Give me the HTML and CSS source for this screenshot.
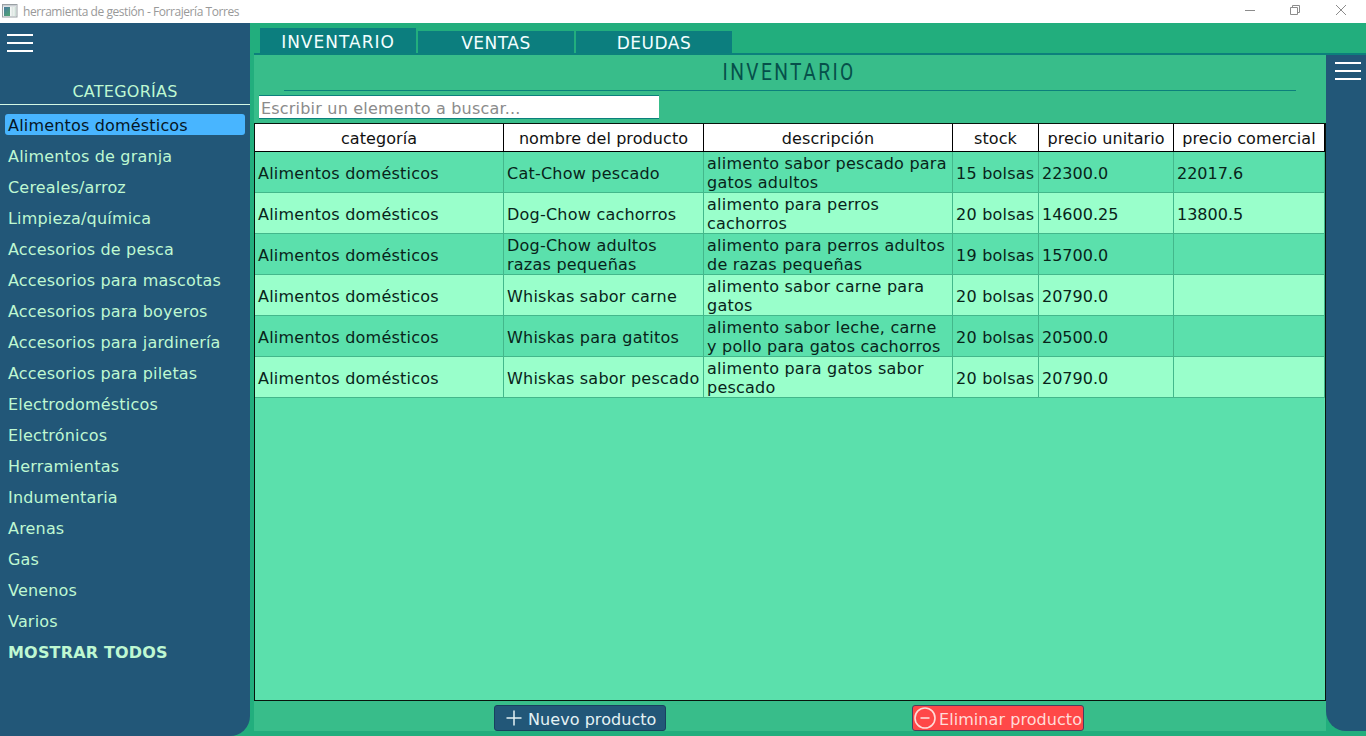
FILE: index.html
```html
<!DOCTYPE html>
<html lang="es">
<head>
<meta charset="utf-8">
<title>herramienta de gestión - Forrajería Torres</title>
<link rel="stylesheet" href="styles.css">
</head>
<body>
<header class="titlebar">
  <svg class="app-icon" width="16" height="14" viewBox="0 0 16 14">
    <defs><linearGradient id="pane" x1="0" y1="0" x2="0.6" y2="1"><stop offset="0" stop-color="#4a7aa0"/><stop offset="1" stop-color="#4fa077"/></linearGradient></defs>
    <rect x="0.5" y="0.5" width="14.5" height="12.5" fill="#f4f6f6" stroke="#9aa0a4"/>
    <rect x="1" y="1" width="13.5" height="1.5" fill="#c9ced2"/>
    <rect x="2" y="3" width="6" height="9" fill="url(#pane)"/>
    <rect x="9.5" y="3" width="2" height="9" fill="#dfe8e4"/>
    <rect x="12.5" y="3" width="1.5" height="9" fill="#cfe0d8"/>
  </svg>
  <span class="window-title">herramienta de gestión - Forrajería Torres</span>
  <svg class="window-controls" width="104" height="12" viewBox="0 0 104 12" fill="none" stroke="#8c8c8c">
    <path d="M0 6.5h10"/>
    <path d="M45.500 3.500h7v7h-7zM47.500 3.500v-2h7v7h-2"/>
    <path d="M91 1l10 10M101 1l-10 10"/>
  </svg>
</header>
<div class="app">
  <aside class="sidebar">
    <div class="burger"><i></i><i></i><i></i></div>
    <h2 class="sidebar-title">CATEGORÍAS</h2>
    <ul class="categories">
      <li class="selected">Alimentos domésticos</li>
      <li>Alimentos de granja</li>
      <li>Cereales/arroz</li>
      <li>Limpieza/química</li>
      <li>Accesorios de pesca</li>
      <li>Accesorios para mascotas</li>
      <li>Accesorios para boyeros</li>
      <li>Accesorios para jardinería</li>
      <li>Accesorios para piletas</li>
      <li>Electrodomésticos</li>
      <li>Electrónicos</li>
      <li>Herramientas</li>
      <li>Indumentaria</li>
      <li>Arenas</li>
      <li>Gas</li>
      <li>Venenos</li>
      <li>Varios</li>
      <li class="all">MOSTRAR TODOS</li>
    </ul>
  </aside>
  <main class="workspace">
    <nav class="tabs">
      <div class="tab active">INVENTARIO</div>
      <div class="tab">VENTAS</div>
      <div class="tab">DEUDAS</div>
    </nav>
    <div class="body">
      <section class="page">
        <h1 class="page-title"><span>INVENTARIO</span></h1>
        <input class="search" type="text" placeholder="Escribir un elemento a buscar...">
        <div class="table-frame">
          <table>
            <colgroup><col class="c-cat"><col class="c-name"><col class="c-desc"><col class="c-stock"><col class="c-unit"><col class="c-com"></colgroup>
            <thead><tr><th>categoría</th><th>nombre del producto</th><th>descripción</th><th>stock</th><th>precio unitario</th><th>precio comercial</th></tr></thead>
            <tbody>
              <tr><td>Alimentos domésticos</td><td>Cat-Chow pescado</td><td>alimento sabor pescado para<br>gatos adultos</td><td>15 bolsas</td><td>22300.0</td><td>22017.6</td></tr>
              <tr><td>Alimentos domésticos</td><td>Dog-Chow cachorros</td><td>alimento para perros<br>cachorros</td><td>20 bolsas</td><td>14600.25</td><td>13800.5</td></tr>
              <tr><td>Alimentos domésticos</td><td>Dog-Chow adultos<br>razas pequeñas</td><td>alimento para perros adultos<br>de razas pequeñas</td><td>19 bolsas</td><td>15700.0</td><td></td></tr>
              <tr><td>Alimentos domésticos</td><td>Whiskas sabor carne</td><td>alimento sabor carne para<br>gatos</td><td>20 bolsas</td><td>20790.0</td><td></td></tr>
              <tr><td>Alimentos domésticos</td><td>Whiskas para gatitos</td><td>alimento sabor leche, carne<br>y pollo para gatos cachorros</td><td>20 bolsas</td><td>20500.0</td><td></td></tr>
              <tr><td>Alimentos domésticos</td><td>Whiskas sabor pescado</td><td>alimento para gatos sabor<br>pescado</td><td>20 bolsas</td><td>20790.0</td><td></td></tr>
            </tbody>
          </table>
        </div>
        <div class="actions">
          <button class="btn add"><svg width="16" height="16" viewBox="0 0 16 16" stroke="#e4f2f4" stroke-width="1.500"><path d="M8 0.500v15M0.500 8h15"/></svg><span>Nuevo producto</span></button>
          <button class="btn remove"><svg width="22" height="22" viewBox="0 0 22 22" fill="none" stroke="#ffdcd8" stroke-width="1.600"><circle cx="11" cy="11" r="10"/><path d="M6.500 11h9"/></svg><span>Eliminar producto</span></button>
        </div>
      </section>
      <aside class="right-panel"><div class="burger"><i></i><i></i><i></i></div></aside>
    </div>
  </main>
</div>
</body>
</html>
```
FILE: styles.css
```css
* { box-sizing: border-box; }
body {
  margin: 0;
  width: 1366px;
  height: 736px;
  overflow: hidden;
  display: flex;
  flex-direction: column;
  background: #22ae7d;
  font: 16px/19px Verdana, "DejaVu Sans", sans-serif;
}
.titlebar {
  flex: none;
  height: 23px;
  display: flex;
  align-items: center;
  padding: 0 17px 0 2px;
  background: #fff;
}
.app-icon { margin-bottom: 1px; }
.window-title {
  margin-left: 5px;
  font: 12px/16px "Open Sans", sans-serif;
  letter-spacing: -0.44px;
  color: #999;
  white-space: nowrap;
}
.window-controls { margin-left: auto; margin-bottom: 3px; }
.app { flex: 1; min-height: 0; display: flex; gap: 4px; }
.sidebar {
  width: 250px;
  background: #225778;
  border-bottom-right-radius: 20px;
  color: #bff8d2;
}
.burger { display: flex; flex-direction: column; gap: 6px; width: 26px; }
.burger i { height: 2px; background: #fff; }
.sidebar .burger { margin: 11px 0 0 7px; }
.sidebar-title {
  margin: 29px 0 0;
  height: 24px;
  border-bottom: 1px solid #d4f7e4;
  font-size: 16px;
  font-weight: 400;
  line-height: 22px;
  letter-spacing: 0.25px;
  text-align: center;
}
.categories {
  list-style: none;
  margin: 9px 5px 0;
  padding: 0;
  display: flex;
  flex-direction: column;
  gap: 10px;
  letter-spacing: 0.18px;
}
.categories li {
  height: 21px;
  padding-left: 3px;
  border-radius: 3px;
  line-height: 24px;
  white-space: nowrap;
}
.categories .selected { background: #48b5ff; color: #051525; }
.categories .all { font-weight: 700; }
.workspace { flex: 1; display: flex; flex-direction: column; padding-bottom: 5px; }
.tabs {
  height: 32px;
  flex: none;
  display: flex;
  align-items: flex-end;
  gap: 2px;
  padding-left: 6px;
  border-bottom: 2px solid #0c807c;
}
.tab {
  width: 156px;
  height: 22px;
  background: #0c7e7e;
  color: #f2ffff;
  text-align: center;
  font-size: 17px;
  line-height: 25px;
  letter-spacing: 0.5px;
}
.tab.active { height: 25px; line-height: 28px; letter-spacing: 1px; }
.body { flex: 1; min-height: 0; display: flex; }
.page { width: 1072px; display: flex; flex-direction: column; background: #38bd8a; }
.page-title {
  margin: 0 30px;
  height: 36px;
  border-bottom: 1px solid #0c807c;
  text-align: center;
  font: 400 24px/34px Roboto, sans-serif;
  letter-spacing: 3px;
  color: #06504a;
}
.page-title span { display: inline-block; margin-right: 2px; transform: scaleX(0.8); }
.search {
  width: 400px;
  height: 24px;
  margin: 4px 0 4px 5px;
  padding: 2px 2px 0;
  border: solid #0c807c;
  border-width: 1px 0;
  background: #fff;
  font: inherit;
  letter-spacing: 0.2px;
}
.search::placeholder { color: #8b8b8b; opacity: 1; }
.table-frame {
  flex: 1;
  border: 1px solid #08140c;
  background: #5be0ac;
}
table { table-layout: fixed; width: 1070px; border-collapse: separate; border-spacing: 0; }
.c-cat, .c-desc { width: 249px; }
.c-name { width: 200px; }
.c-stock { width: 86px; }
.c-unit { width: 135px; }
.c-com { width: 151px; }
th {
  height: 28px;
  padding: 1px 0 0;
  background: #fff;
  border: solid #000;
  border-width: 0 1px 1px 0;
  font-weight: 400;
  letter-spacing: 0.08px;
  color: #111;
}
td {
  height: 41px;
  padding: 2px 0 0 3px;
  border: solid #43b88b;
  border-width: 0 1px 1px 0;
  color: #08241a;
  letter-spacing: 0.23px;
  white-space: nowrap;
}
td:nth-child(n+5) { letter-spacing: 0; }
tbody tr:nth-child(even) { background: #99ffcb; }
.actions { height: 30px; display: flex; gap: 246px; padding: 4px 0 0 240px; }
.btn {
  width: 172px;
  height: 26px;
  display: flex;
  align-items: center;
  padding: 0;
  border: 1px solid #19405f;
  border-radius: 3px;
  font: inherit;
  white-space: nowrap;
}
.btn span { padding-top: 2px; letter-spacing: 0.06px; }
.add { background: #225778; color: #e4f2f4; gap: 6px; padding-left: 11px; }
.remove { background: #ff4848; color: #ffdcd8; border-color: #4a3f5e; gap: 3px; padding-left: 1px; }
.right-panel { width: 40px; background: #225778; border-bottom-left-radius: 20px; }
.right-panel .burger { margin: 7px 0 0 9px; }
```
